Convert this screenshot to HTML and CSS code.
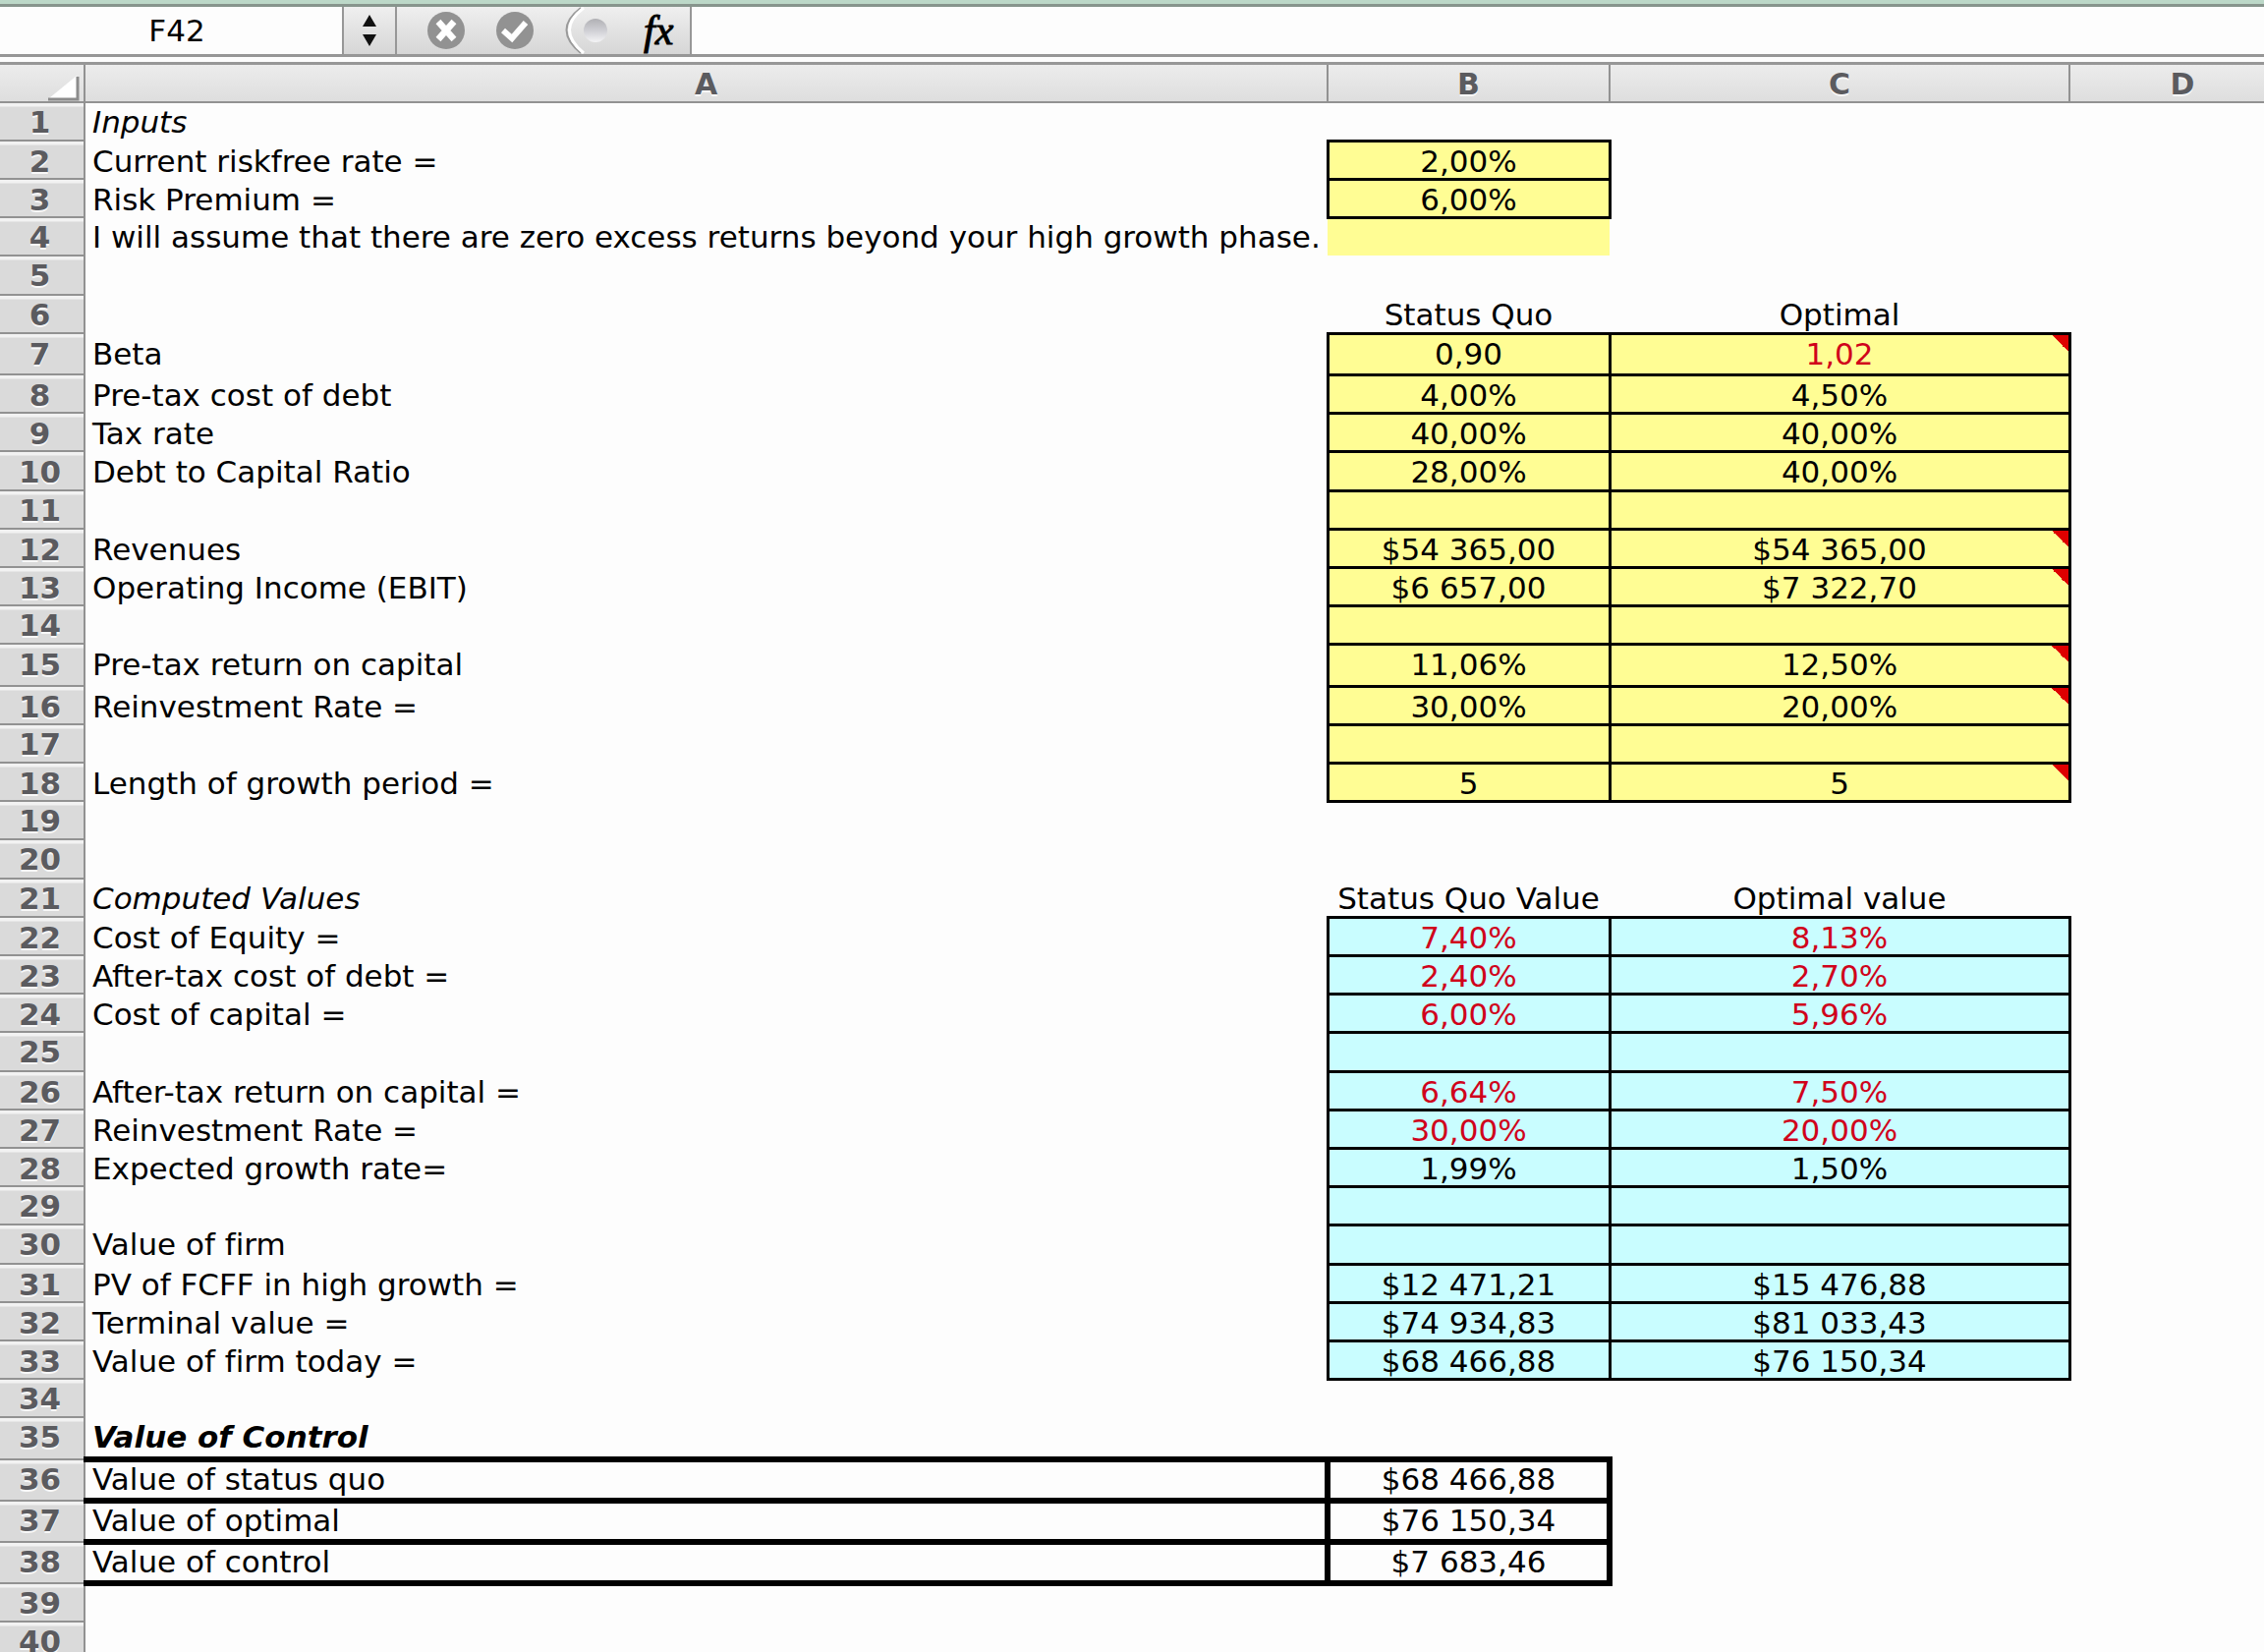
FILE: index.html
```html
<!DOCTYPE html>
<html lang="en">
<head>
<meta charset="utf-8">
<title>Value of Control</title>
<link rel="stylesheet" href="styles.css">
</head>
<body>
<div class="workbook">
  <header class="formula-bar">
    <input class="name-box" type="text" value="F42" aria-label="Name box">
    <button class="stepper" type="button" aria-label="Choose a name">
      <svg width="14" height="32" viewBox="0 0 14 32"><path d="M7 0 14 12H0zM0 20H14L7 32z" fill="#111"/></svg>
    </button>
    <div class="tools">
      <button class="tool" type="button" aria-label="Cancel">
        <svg width="40" height="40" viewBox="0 0 40 40"><circle cx="20" cy="20" r="19" fill="#929292"/><path d="M12 11 28 29M28 11 12 29" stroke="#fff" stroke-width="6.5"/></svg>
      </button>
      <button class="tool" type="button" aria-label="Enter">
        <svg width="40" height="40" viewBox="0 0 40 40"><circle cx="20" cy="20" r="19" fill="#929292"/><path d="M8 20 17 28 31 12" fill="none" stroke="#fff" stroke-width="6"/></svg>
      </button>
      <span class="knob">
        <svg width="46" height="48" viewBox="0 0 46 48"><defs><linearGradient id="ball" x2="0" y2="1"><stop offset="0" stop-color="#b0b0b4"/><stop offset=".5" stop-color="#cfcfd4"/><stop offset="1" stop-color="#f4f4f6"/></linearGradient></defs><path d="M17 1Q-12 23 17 47" fill="none" stroke="#9a9a9a" stroke-width="2"/><path d="M20 1Q-9 23 20 47" fill="none" stroke="#fff" stroke-width="3"/><circle cx="32" cy="24" r="12" fill="url(#ball)"/></svg>
      </span>
      <button class="tool fx" type="button" aria-label="Insert function">fx</button>
    </div>
    <input class="formula" type="text" aria-label="Formula">
  </header>

  <main class="sheet">
    <table class="grid">
      <colgroup><col class="col-head"><col class="col-a"><col class="col-b"><col class="col-c"><col class="col-d"></colgroup>
      <thead>
        <tr><th class="corner"><svg width="32" height="26" viewBox="0 0 32 26"><path d="M29 0V23H1z" fill="#fff"/><path d="M30 1V24H0" fill="none" stroke="#8c8c8c" stroke-width="3"/></svg></th><th>A</th><th>B</th><th>C</th><th>D</th></tr>
      </thead>
      <tbody>
        <tr><th>1</th><td class="title">Inputs</td><td></td><td></td><td></td></tr>
        <tr><th>2</th><td>Current riskfree rate =</td><td class="in">2,00%</td><td></td><td></td></tr>
        <tr><th>3</th><td>Risk Premium =</td><td class="in">6,00%</td><td></td><td></td></tr>
        <tr><th>4</th><td>I will assume that there are zero excess returns beyond your high growth phase.</td><td class="fill"></td><td></td><td></td></tr>
        <tr><th>5</th><td></td><td></td><td></td><td></td></tr>
        <tr><th>6</th><td></td><td>Status Quo</td><td>Optimal</td><td></td></tr>
        <tr class="tall"><th>7</th><td>Beta</td><td class="in">0,90</td><td class="in red note">1,02</td><td></td></tr>
        <tr><th>8</th><td>Pre-tax cost of debt</td><td class="in">4,00%</td><td class="in">4,50%</td><td></td></tr>
        <tr><th>9</th><td>Tax rate</td><td class="in">40,00%</td><td class="in">40,00%</td><td></td></tr>
        <tr><th>10</th><td>Debt to Capital Ratio</td><td class="in">28,00%</td><td class="in">40,00%</td><td></td></tr>
        <tr><th>11</th><td></td><td class="in"></td><td class="in"></td><td></td></tr>
        <tr><th>12</th><td>Revenues</td><td class="in">$54 365,00</td><td class="in note">$54 365,00</td><td></td></tr>
        <tr><th>13</th><td>Operating Income (EBIT)</td><td class="in">$6 657,00</td><td class="in note">$7 322,70</td><td></td></tr>
        <tr><th>14</th><td></td><td class="in"></td><td class="in"></td><td></td></tr>
        <tr class="tall"><th>15</th><td>Pre-tax return on capital</td><td class="in">11,06%</td><td class="in note">12,50%</td><td></td></tr>
        <tr><th>16</th><td>Reinvestment Rate =</td><td class="in">30,00%</td><td class="in note">20,00%</td><td></td></tr>
        <tr><th>17</th><td></td><td class="in"></td><td class="in"></td><td></td></tr>
        <tr><th>18</th><td>Length of growth period =</td><td class="in">5</td><td class="in note">5</td><td></td></tr>
        <tr><th>19</th><td></td><td></td><td></td><td></td></tr>
        <tr><th>20</th><td></td><td></td><td></td><td></td></tr>
        <tr><th>21</th><td class="title">Computed Values</td><td>Status Quo Value</td><td>Optimal value</td><td></td></tr>
        <tr><th>22</th><td>Cost of Equity =</td><td class="out red">7,40%</td><td class="out red">8,13%</td><td></td></tr>
        <tr><th>23</th><td>After-tax cost of debt =</td><td class="out red">2,40%</td><td class="out red">2,70%</td><td></td></tr>
        <tr><th>24</th><td>Cost of capital =</td><td class="out red">6,00%</td><td class="out red">5,96%</td><td></td></tr>
        <tr><th>25</th><td></td><td class="out"></td><td class="out"></td><td></td></tr>
        <tr><th>26</th><td>After-tax return on capital =</td><td class="out red">6,64%</td><td class="out red">7,50%</td><td></td></tr>
        <tr><th>27</th><td>Reinvestment Rate =</td><td class="out red">30,00%</td><td class="out red">20,00%</td><td></td></tr>
        <tr><th>28</th><td>Expected growth rate=</td><td class="out">1,99%</td><td class="out">1,50%</td><td></td></tr>
        <tr><th>29</th><td></td><td class="out"></td><td class="out"></td><td></td></tr>
        <tr><th>30</th><td>Value of firm</td><td class="out"></td><td class="out"></td><td></td></tr>
        <tr><th>31</th><td>PV of FCFF in high growth =</td><td class="out">$12 471,21</td><td class="out">$15 476,88</td><td></td></tr>
        <tr><th>32</th><td>Terminal value =</td><td class="out">$74 934,83</td><td class="out">$81 033,43</td><td></td></tr>
        <tr><th>33</th><td>Value of firm today =</td><td class="out">$68 466,88</td><td class="out">$76 150,34</td><td></td></tr>
        <tr><th>34</th><td></td><td></td><td></td><td></td></tr>
        <tr class="tall"><th>35</th><td class="title strong">Value of Control</td><td></td><td></td><td></td></tr>
        <tr class="tall"><th>36</th><td class="box">Value of status quo</td><td class="box">$68 466,88</td><td></td><td></td></tr>
        <tr class="tall"><th>37</th><td class="box">Value of optimal</td><td class="box">$76 150,34</td><td></td><td></td></tr>
        <tr class="tall"><th>38</th><td class="box">Value of control</td><td class="box">$7 683,46</td><td></td><td></td></tr>
        <tr><th>39</th><td></td><td></td><td></td><td></td></tr>
        <tr><th>40</th><td></td><td></td><td></td><td></td></tr>
      </tbody>
    </table>
  </main>
</div>
</body>
</html>
```

FILE: styles.css
```css
* {
  box-sizing: border-box;
}

body {
  margin: 0;
  background: #fdfdfd;
  color: #000;
  font-family: "DejaVu Sans", Verdana, sans-serif;
  font-size: 31px;
  font-variant-ligatures: none;
}

.workbook {
  height: 100vh;
  overflow: hidden;
  border-top: 4px solid #bcd8c8;
}

/* Formula bar */

.formula-bar {
  display: flex;
  height: 54px;
  border-top: 3px solid #87958d;
  border-bottom: 3px solid #979797;
  background: linear-gradient(#efefef, #d6d6d6);
}

.formula-bar input,
.formula-bar button {
  margin: 0;
  padding: 0;
  border: 0;
  border-radius: 0;
  background: none;
  color: inherit;
  font: inherit;
}

.formula-bar .name-box {
  width: 350px;
  padding-left: 12px;
  border-right: 2px solid #979797;
  background: #fdfdfd;
  text-align: center;
}

.formula-bar .stepper {
  display: flex;
  align-items: center;
  justify-content: center;
  width: 54px;
  border-right: 2px solid #979797;
}

.tools {
  display: flex;
  align-items: center;
  gap: 30px;
  width: 300px;
  padding-left: 30px;
  border-right: 2px solid #979797;
}

.tool,
.knob {
  display: flex;
}

.knob svg {
  display: block;
}

.formula-bar .fx {
  padding-left: 5px;
  font: italic 42px/44px "Liberation Serif", serif;
  -webkit-text-stroke: 1px #000;
}

.formula-bar .formula {
  flex: 1;
  min-width: 0;
  padding: 0 8px;
  background: #fdfdfd;
}

/* Sheet */

.sheet {
  margin-top: 5px;
  border-top: 3px solid #979797;
}

.grid {
  width: 2336px;
  table-layout: fixed;
  border-collapse: collapse;
}

.col-head { width: 86px; }
.col-a { width: 1265px; }
.col-b { width: 287px; }
.col-c { width: 468px; }
.col-d { width: 230px; }

tr { height: 39px; }
tr:nth-child(5n) { height: 40px; }
thead tr { height: 38px; }
tr.tall { height: 42px; }
tr.tall:nth-child(5n) { height: 43px; }

th,
td {
  padding: 3px 0 0;
  line-height: 33px;
  vertical-align: baseline;
  white-space: nowrap;
  text-align: center;
}

td:nth-child(2) {
  padding-left: 7px;
  text-align: left;
}

th {
  border: 2px solid #929292;
  color: #5b5b5f;
  font-weight: bold;
  text-shadow: 0 2px 0 #f8f8f8;
}

thead th {
  border-top: 0;
  background: linear-gradient(#ececec, #dedede);
  font-size: 30px;
}

tbody th {
  padding-right: 4px;
  background: linear-gradient(#f2f2f2 3px, #dadada 4px);
}

th:first-child {
  border-left: 0;
}

.grid .corner {
  padding: 0 4px 0 0;
  vertical-align: bottom;
  text-align: right;
}

.corner svg {
  display: inline-block;
  vertical-align: bottom;
}

.title { font-style: italic; }
.strong { font-weight: bold; }
.red { color: #d0021b; }

.in,
.out {
  border: 3px solid #000;
}

.in,
.fill {
  background-color: #fffd94;
}

.out {
  background-color: #c9fdff;
}

/* Comment marker in the top right corner of a cell */
.note {
  background-image: linear-gradient(to bottom left, #dd0000 50%, transparent 50%);
  background-position: top right;
  background-repeat: no-repeat;
  background-size: 17px 17px;
}

.box {
  padding-top: 1px;
  border: 6px solid #000;
}

.box:nth-child(2) {
  border-left: 0;
}
```
